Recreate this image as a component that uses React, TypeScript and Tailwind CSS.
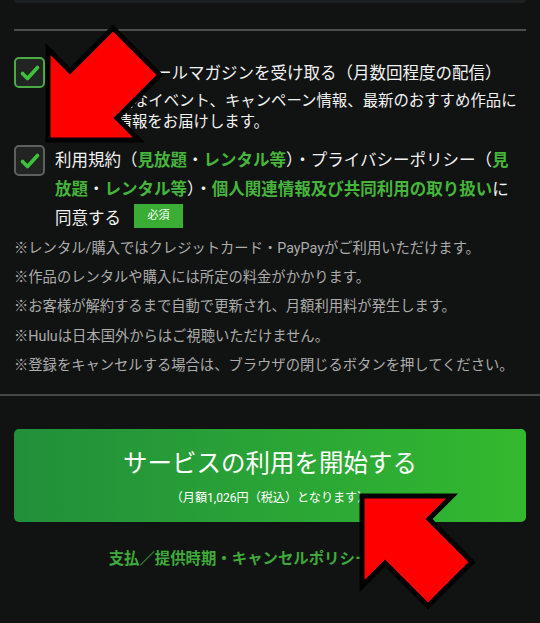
import React from "react";

function Check({ green }: { green: boolean }) {
  return (
    <div
      className={
        "flex h-[31px] w-[31px] shrink-0 items-center justify-center rounded-[5px] border-2 bg-[#222423] " +
        (green ? "border-[#4caa45]" : "border-[#5e605f]")
      }
    >
      <svg width="22" height="22" viewBox="0 0 22 22">
        <polyline
          points="3.5,11.5 8.5,16.5 18.5,5.5"
          fill="none"
          stroke="#3ec23a"
          strokeWidth="3.6"
          strokeLinecap="round"
          strokeLinejoin="round"
        />
      </svg>
    </div>
  );
}

export default function App() {
  const g = "font-bold text-[#45b53b]";
  return (
    <div className="relative h-[623px] w-[540px] overflow-hidden bg-[#111312] font-['Roboto','Noto_Sans_CJK_JP',sans-serif] text-[#f2f2f2]">
      <div className="mx-[14px] h-[3px] rounded-b-[3px] bg-[#1d2020]" />
      <div className="mx-[14px] mt-[26px] h-[2px] bg-[#4a4e4d]" />

      <div className="mx-[14px] mt-[26px] flex gap-[10px]">
        <Check green />
        <div className="w-[471px]">
          <div className="pt-[5px] text-[16.5px] leading-[24px]">
            Huluからのメールマガジンを受け取る（月数回程度の配信）
          </div>
          <div className="mt-[5px] text-[15.4px] leading-[20.5px]">
            Huluの素敵なイベント、キャンペーン情報、最新のおすすめ作品に関連する情報をお届けします。
          </div>
        </div>
      </div>

      <div className="mx-[14px] mt-[13px] flex gap-[10px]">
        <Check green={false} />
        <div className="w-[460px] pt-[1px] text-[16.5px] leading-[29px]">
          利用規約（<span className={g}>見放題</span>・<span className={g}>レンタル等</span>）・プライバシーポリシー（<span className={g}>見放題</span>・<span className={g}>レンタル等</span>）・<span className={g}>個人関連情報及び共同利用の取り扱い</span>に同意する
          <span className="ml-[13px] inline-block h-[24px] w-[49px] bg-[#3aae34] text-center align-top text-[11px] leading-[24px] text-white">
            必須
          </span>
        </div>
      </div>

      <div className="mx-[14px] mt-[1px] text-[14.3px] leading-[29.2px] text-[#acacac]">
        <div>※レンタル/購入ではクレジットカード・PayPayがご利用いただけます。</div>
        <div>※作品のレンタルや購入には所定の料金がかかります。</div>
        <div>※お客様が解約するまで自動で更新され、月額利用料が発生します。</div>
        <div>※Huluは日本国外からはご視聴いただけません。</div>
        <div>※登録をキャンセルする場合は、ブラウザの閉じるボタンを押してください。</div>
      </div>

      <div className="mt-[14px] h-[2px] bg-[#454847]" />

      <div className="mx-[14px] mt-[33px] flex h-[93px] flex-col items-center justify-center rounded-[5px] bg-gradient-to-r from-[#218f3a] to-[#33b92e] pt-[3px] text-white">
        <div className="text-[24.5px] leading-[32px]">サービスの利用を開始する</div>
        <div className="mt-[10px] text-[12.1px] leading-[16px]">（月額1,026円（税込）となります）</div>
      </div>

      <div className="mt-[26px] text-center text-[15.4px] font-bold leading-[22px] text-[#3daa39]">
        支払／提供時期・キャンセルポリシーについて
      </div>

      <svg
        className="pointer-events-none absolute left-0 top-0"
        width="540"
        height="623"
        viewBox="0 0 540 623"
      >
        <polygon
          points="48,140 48,49 70,71 113,28 160,75 117,118 139,140"
          fill="#ff0000"
          stroke="#000"
          strokeWidth="5"
          strokeLinejoin="miter"
        />
        <polygon
          points="362,496 452,496 429,519 472,562 428,606 385,563 362,586"
          fill="#ff0000"
          stroke="#000"
          strokeWidth="5"
          strokeLinejoin="miter"
        />
      </svg>
    </div>
  );
}
